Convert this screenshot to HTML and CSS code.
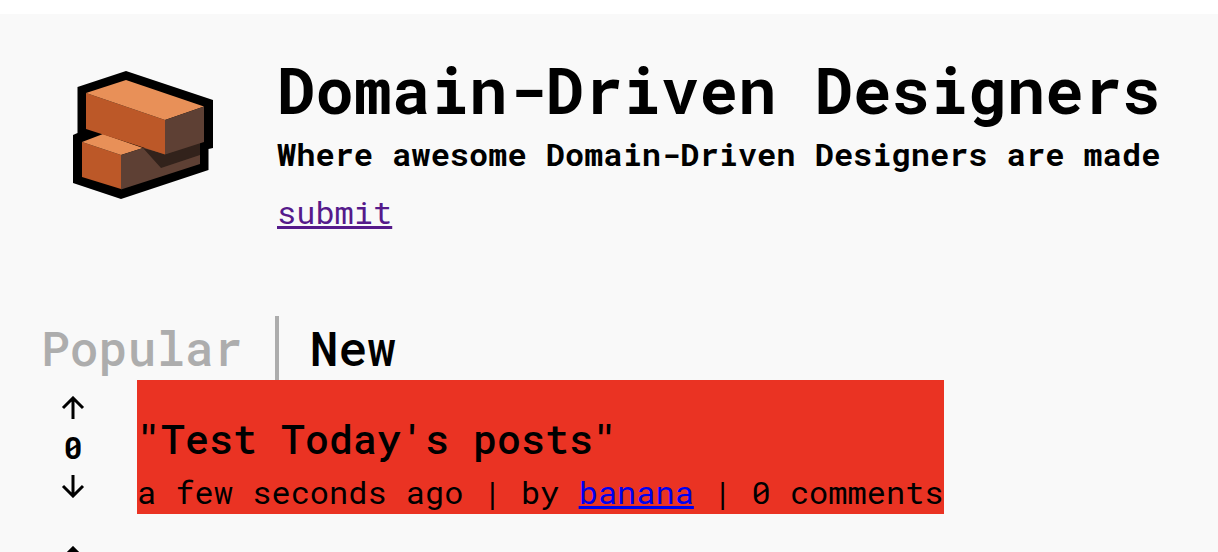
FILE: index.html
```html
<!DOCTYPE html>
<html lang="en">
<head>
<meta charset="utf-8">
<title>Domain-Driven Designers</title>
<link rel="stylesheet" href="styles.css">
</head>
<body>
<div class="app">
  <header class="header">
    <svg class="logo" viewBox="0 0 140 128" aria-hidden="true">
      <path d="M53 0 140 29V77L135.500 78V99L48 128 0 112V64L4.500 62V16Z" fill="#000"/>
      <path d="M9 71 48 84V118L9 106Z" fill="#bc5828"/>
      <path d="M9 71 30 63 70 77 48 84Z" fill="#e89058"/>
      <path d="M48 84 70 77 127 70V93L48 118.500Z" fill="#5e4034"/>
      <path d="M70 77 92 83 127 71V84L88 97Z" fill="#32221b"/>
      <path d="M13 22 92 49V83.500L13 58Z" fill="#bc5828"/>
      <path d="M13 22 53 9 131 35.500 92 49Z" fill="#e89058"/>
      <path d="M92 49 131 35.500V71L92 83.500Z" fill="#5e4034"/>
    </svg>
    <div class="intro">
      <h1 class="title">Domain-Driven Designers</h1>
      <h2 class="tagline">Where awesome Domain-Driven Designers are made</h2>
      <a class="submit" href="#">submit</a>
    </div>
  </header>
  <nav class="tabs">
    <button class="tab" type="button">Popular</button>
    <button class="tab tab-active" type="button">New</button>
  </nav>
  <main class="posts">
    <article class="post">
      <div class="votes">
        <button class="vote" type="button" aria-label="Upvote"><svg class="arrow" viewBox="0 0 24 24"><path d="M12 23V2M2 12 12 2 22 12"/></svg></button>
        <span class="score">0</span>
        <button class="vote" type="button" aria-label="Downvote"><svg class="arrow" viewBox="0 0 24 24"><path d="M12 1V22M2 12 12 22 22 12"/></svg></button>
      </div>
      <div class="content">
        <h3 class="post-title">"Test Today's posts"</h3>
        <p class="meta">a few seconds ago | by <a href="#">banana</a> | 0 comments</p>
      </div>
    </article>
    <article class="post">
      <div class="votes">
        <button class="vote" type="button" aria-label="Upvote"><svg class="arrow" viewBox="0 0 24 24"><path d="M12 23V2M2 12 12 2 22 12"/></svg></button>
      </div>
    </article>
  </main>
</div>
</body>
</html>
```
FILE: styles.css
```css
* { box-sizing: border-box; }
html { height: 100%; overflow: hidden; background: #fff; }
body {
  height: 100%;
  margin: 0;
  padding-top: 14px;
  overflow: hidden;
  color: #000;
  font-family: "Roboto Mono", "DejaVu Sans Mono", monospace;
}
h1, h2, h3, p { margin: 0; }
button { padding: 0; border: 0; background: none; color: inherit; font: inherit; }
.app { min-height: 100%; padding: 40px 41px 0; background: #f9f9f9; }
.header { display: flex; gap: 64px; padding-left: 32px; }
.logo { flex: none; width: 140px; height: 128px; margin-top: 17px; }
.intro { white-space: nowrap; }
.title { font-size: 64px; line-height: 70px; }
.tagline { font-size: 32px; line-height: 60px; }
.submit { display: inline-block; margin-top: 6px; color: #551a8b; font-size: 32px; line-height: 44px; }
.tabs { display: flex; margin-top: 82px; font-size: 48px; line-height: 64px; }
.tab { color: #adadad; font-weight: 500; }
.tab-active { margin-left: 32px; padding-left: 31px; border-left: 4px solid #adadad; color: #000; }
.post { display: flex; gap: 32px; margin-bottom: 16px; }
.votes { display: flex; flex-direction: column; align-items: center; width: 64px; padding-top: 14px; }
.vote { height: 28px; }
.arrow { display: block; width: 24px; height: 24px; fill: none; stroke: #000; stroke-width: 3; }
.score { font-size: 32px; font-weight: 700; line-height: 50px; }
.content { padding-top: 28px; background: #ea3323; white-space: nowrap; }
.post-title { font-size: 40px; font-weight: 500; line-height: 62px; }
.meta { font-size: 32px; line-height: 44px; }
```
